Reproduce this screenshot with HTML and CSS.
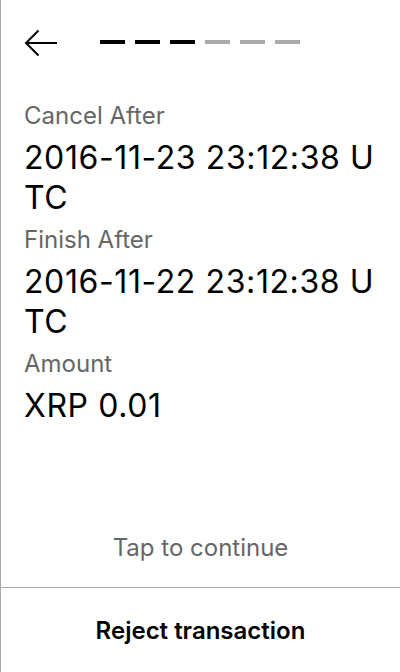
FILE: index.html
```html
<!DOCTYPE html>
<html>
<head>
<meta charset="utf-8">
<link rel="stylesheet" href="styles.css">
</head>
<body>
<div class="screen">
  <header class="header">
    <svg class="back" width="34" height="30" viewBox="0 0 34 30" fill="none" stroke="#000" stroke-width="2">
      <path d="M2 15 H33"/>
      <path d="M14.5 2.5 L2 15 L14.5 27.5"/>
    </svg>
    <div class="steps">
      <span class="step on"></span>
      <span class="step on"></span>
      <span class="step on"></span>
      <span class="step"></span>
      <span class="step"></span>
      <span class="step"></span>
    </div>
  </header>
  <main class="content">
    <div class="field">
      <div class="label">Cancel After</div>
      <div class="value">2016-11-23 23:12:38 UTC</div>
    </div>
    <div class="field">
      <div class="label">Finish After</div>
      <div class="value">2016-11-22 23:12:38 UTC</div>
    </div>
    <div class="field">
      <div class="label">Amount</div>
      <div class="value">XRP 0.01</div>
    </div>
  </main>
  <footer class="footer">
    <div class="tap">Tap to continue</div>
    <div class="reject">Reject transaction</div>
  </footer>
</div>
</body>
</html>
```
FILE: styles.css
```css
html, body {
  margin: 0;
  padding: 0;
  background: #fff;
}
body {
  font-family: Inter, "Noto Sans", sans-serif;
  color: #000;
}
.screen {
  width: 400px;
  height: 672px;
  box-sizing: border-box;
  border-left: 1px solid #aaa;
  display: flex;
  flex-direction: column;
}
.header {
  height: 86px;
  display: flex;
  align-items: center;
  padding-left: 23px;
  flex-shrink: 0;
}
.back {
  display: block;
}
.steps {
  display: flex;
  gap: 10px;
  margin-left: 42px;
  margin-top: -2px;
}
.step {
  width: 25px;
  height: 4px;
  background: #aaa;
}
.step.on {
  background: #000;
}
.content {
  flex: 1;
  padding: 8px 12px 0 23px;
}
.label {
  font-size: 24px;
  line-height: 28px;
  padding: 8px 0;
  color: #666;
}
.value {
  font-size: 32px;
  letter-spacing: 0.6px;
  line-height: 40px;
  word-break: break-all;
}
.footer {
  flex-shrink: 0;
}
.tap {
  height: 80px;
  display: flex;
  align-items: center;
  justify-content: center;
  font-size: 24px;
  color: #666;
  border-bottom: 1px solid #aaa;
  box-sizing: border-box;
}
.reject {
  height: 84px;
  display: flex;
  align-items: center;
  justify-content: center;
  font-size: 24px;
  font-weight: 600;
}
```
